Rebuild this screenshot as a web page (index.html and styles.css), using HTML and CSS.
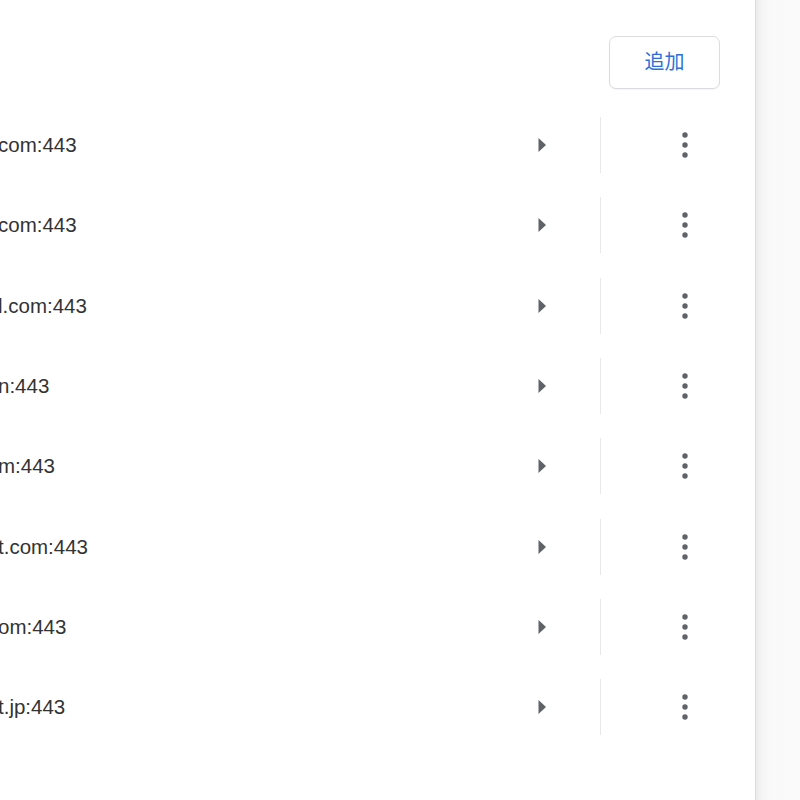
FILE: index.html
```html
<!DOCTYPE html>
<html lang="ja">
<head>
<meta charset="utf-8">
<link rel="stylesheet" href="styles.css">
</head>
<body>
<div class="page">
  <main class="panel">
    <div class="header">
      <button class="add-btn">追加</button>
    </div>
    <ul class="list">
      <li class="row"><span class="host">com:443</span><button class="expand"><svg viewBox="0 0 10 16" width="10" height="16"><path d="M1.5 1 L9 8 L1.5 15 Z"/></svg></button><span class="sep"></span><button class="more"><svg viewBox="0 0 6 26" width="6" height="26"><circle cx="3" cy="3" r="2.7"/><circle cx="3" cy="13" r="2.7"/><circle cx="3" cy="23" r="2.7"/></svg></button></li>
      <li class="row"><span class="host">com:443</span><button class="expand"><svg viewBox="0 0 10 16" width="10" height="16"><path d="M1.5 1 L9 8 L1.5 15 Z"/></svg></button><span class="sep"></span><button class="more"><svg viewBox="0 0 6 26" width="6" height="26"><circle cx="3" cy="3" r="2.7"/><circle cx="3" cy="13" r="2.7"/><circle cx="3" cy="23" r="2.7"/></svg></button></li>
      <li class="row"><span class="host">l.com:443</span><button class="expand"><svg viewBox="0 0 10 16" width="10" height="16"><path d="M1.5 1 L9 8 L1.5 15 Z"/></svg></button><span class="sep"></span><button class="more"><svg viewBox="0 0 6 26" width="6" height="26"><circle cx="3" cy="3" r="2.7"/><circle cx="3" cy="13" r="2.7"/><circle cx="3" cy="23" r="2.7"/></svg></button></li>
      <li class="row"><span class="host">n:443</span><button class="expand"><svg viewBox="0 0 10 16" width="10" height="16"><path d="M1.5 1 L9 8 L1.5 15 Z"/></svg></button><span class="sep"></span><button class="more"><svg viewBox="0 0 6 26" width="6" height="26"><circle cx="3" cy="3" r="2.7"/><circle cx="3" cy="13" r="2.7"/><circle cx="3" cy="23" r="2.7"/></svg></button></li>
      <li class="row"><span class="host">m:443</span><button class="expand"><svg viewBox="0 0 10 16" width="10" height="16"><path d="M1.5 1 L9 8 L1.5 15 Z"/></svg></button><span class="sep"></span><button class="more"><svg viewBox="0 0 6 26" width="6" height="26"><circle cx="3" cy="3" r="2.7"/><circle cx="3" cy="13" r="2.7"/><circle cx="3" cy="23" r="2.7"/></svg></button></li>
      <li class="row"><span class="host">t.com:443</span><button class="expand"><svg viewBox="0 0 10 16" width="10" height="16"><path d="M1.5 1 L9 8 L1.5 15 Z"/></svg></button><span class="sep"></span><button class="more"><svg viewBox="0 0 6 26" width="6" height="26"><circle cx="3" cy="3" r="2.7"/><circle cx="3" cy="13" r="2.7"/><circle cx="3" cy="23" r="2.7"/></svg></button></li>
      <li class="row"><span class="host">om:443</span><button class="expand"><svg viewBox="0 0 10 16" width="10" height="16"><path d="M1.5 1 L9 8 L1.5 15 Z"/></svg></button><span class="sep"></span><button class="more"><svg viewBox="0 0 6 26" width="6" height="26"><circle cx="3" cy="3" r="2.7"/><circle cx="3" cy="13" r="2.7"/><circle cx="3" cy="23" r="2.7"/></svg></button></li>
      <li class="row"><span class="host">t.jp:443</span><button class="expand"><svg viewBox="0 0 10 16" width="10" height="16"><path d="M1.5 1 L9 8 L1.5 15 Z"/></svg></button><span class="sep"></span><button class="more"><svg viewBox="0 0 6 26" width="6" height="26"><circle cx="3" cy="3" r="2.7"/><circle cx="3" cy="13" r="2.7"/><circle cx="3" cy="23" r="2.7"/></svg></button></li>
    </ul>
  </main>
  <aside class="side"></aside>
</div>
</body>
</html>
```
FILE: styles.css
```css
html, body {
  margin: 0;
  padding: 0;
  height: 100%;
  overflow: hidden;
  background: #ffffff;
}
.page {
  display: flex;
  height: 800px;
  font-family: "Liberation Sans", Arial, "Noto Sans CJK JP", sans-serif;
}
.panel {
  width: 755px;
  flex: none;
  background: #ffffff;
  overflow: hidden;
}
.side {
  flex: 1;
  border-left: 1px solid #dcdcdc;
  background: linear-gradient(to right, #ececec 0px, #f5f5f5 6px, #f9f9f9 14px, #fafafa 100%);
}
.header {
  height: 105px;
  display: flex;
  justify-content: flex-end;
  align-items: flex-start;
  padding-right: 35px;
  box-sizing: border-box;
  padding-top: 36px;
}
.add-btn {
  width: 111px;
  height: 53px;
  border: 1px solid #dadce0;
  border-radius: 7px;
  background: #ffffff;
  color: #2f6fd6;
  font-family: "Noto Sans CJK JP", sans-serif;
  font-size: 20px;
  padding: 0 0 4px 0;
  box-shadow: 0 1px 1px rgba(0,0,0,0.04);
}
.list {
  list-style: none;
  margin: 0;
  padding: 0;
}
.row {
  height: 80.3px;
  display: flex;
  align-items: center;
  padding-right: 46px;
}
.host {
  flex: 1;
  margin-left: -2px;
  font-size: 20.5px;
  color: #333333;
  white-space: nowrap;
}
.expand {
  width: 48px;
  height: 48px;
  border: 0;
  background: none;
  padding: 0 4px 0 0;
  display: flex;
  align-items: center;
  justify-content: center;
}
.expand svg {
  fill: #5f6368;
}
.sep {
  width: 1px;
  height: 56px;
  background: #e8e8e8;
  margin-left: 32px;
}
.more {
  width: 48px;
  height: 48px;
  margin-left: 60px;
  border: 0;
  background: none;
  padding: 0;
  display: flex;
  align-items: center;
  justify-content: center;
}
.more svg {
  fill: #5f6368;
}
```
